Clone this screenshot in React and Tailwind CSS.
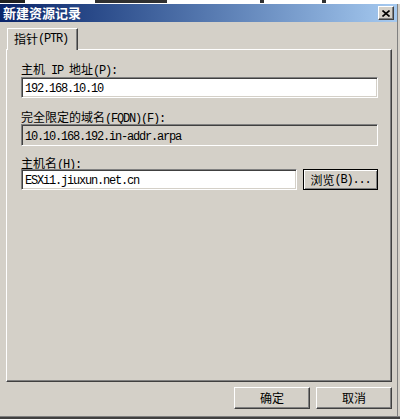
const CJK = /([\u3000-\u9fff\uff00-\uffef]+)/

function Txt({ s }) {
  return s.split(CJK).filter(Boolean).map((p, i) =>
    CJK.test(p) ? (
      <span key={i} className="font-['Noto_Sans_CJK_SC',sans-serif] text-[12px]">{p}</span>
    ) : (
      <span key={i} className="font-['Liberation_Mono',monospace] text-[12px] tracking-[-1.2px]">{p}</span>
    )
  )
}

function Field({ value, disabled, className = '' }) {
  return (
    <div
      className={`flex h-[21px] items-center border border-t-[#808080] border-l-[#808080] border-b-white border-r-white pl-[2px] leading-[12px] text-black shadow-[inset_1px_1px_0_#404040,inset_-1px_-1px_0_#d4d0c8] ${disabled ? 'bg-[#d4d0c8]' : 'bg-white'} ${className}`}
    >
      <div className="pl-[1px]"><Txt s={value} /></div>
    </div>
  )
}

function Button({ label, focused, className = '' }) {
  return (
    <div
      className={`flex items-center justify-center leading-[12px] text-black ${focused ? 'border border-black shadow-[inset_1px_1px_0_#fff,inset_-1px_-1px_0_#808080]' : 'border border-t-white border-l-white border-b-[#404040] border-r-[#404040] shadow-[inset_-1px_-1px_0_#808080]'} ${className}`}
    >
      <Txt s={label} />
    </div>
  )
}

export default function App() {
  return (
    <div className="flex h-[419px] w-[400px] flex-col overflow-hidden bg-[#d4d0c8]">
      {/* leftover of the window behind */}
      <div className="flex h-[4px] items-start bg-white">
        <span className="h-[3px] w-[25px] bg-[#202020]" />
        <span className="ml-[70px] h-[3px] w-[72px] bg-[#303030]" />
        <span className="ml-[93px] h-[3px] w-[4px] bg-[#303030]" />
        <span className="ml-[58px] h-[3px] w-[4px] bg-[#303030]" />
      </div>

      <div className="mr-[2px] flex flex-1 flex-col border-r border-r-[#808080]">
        {/* title bar */}
        <div className="flex h-[18px] items-center justify-between bg-gradient-to-r from-[#0a246a] to-[#a6caf0] pl-[3px] pr-[3px]">
          <span className="font-['Noto_Sans_CJK_SC',sans-serif] text-[13px] font-bold leading-[14px] text-white">新建资源记录</span>
          <div className="flex h-[14px] w-[16px] items-center justify-center border border-t-white border-l-white border-b-[#404040] border-r-[#404040] bg-[#d4d0c8] shadow-[inset_-1px_-1px_0_#808080]">
            <svg width="8" height="7" viewBox="0 0 8 7">
              <path d="M0.5 0.5 L7.5 6.5 M7.5 0.5 L0.5 6.5" stroke="#000" strokeWidth="1.6" />
            </svg>
          </div>
        </div>

        {/* tabs */}
        <div className="mt-[6px] pl-[7px]">
          <div className="relative z-10 -mb-[1px] flex h-[22px] w-[71px] items-start border-t border-l border-r border-t-white border-l-white border-r-[#404040] bg-[#d4d0c8] pl-[6px] pt-[4px] leading-[12px] shadow-[inset_-1px_0_0_#808080]">
            <Txt s="指针(PTR)" />
          </div>
        </div>

        {/* tab panel */}
        <div className="ml-[6px] flex h-[333px] w-[386px] flex-col border border-t-white border-l-white border-b-[#404040] border-r-[#404040] shadow-[inset_-1px_-1px_0_#808080]">
          <div className="ml-[14px] flex flex-col">
            <div className="mt-[12px] h-[12px] leading-[12px] text-black"><Txt s="主机 IP 地址(P):" /></div>
            <Field value="192.168.10.10" className="mt-[3px] w-[357px]" />

            <div className="mt-[12px] h-[12px] leading-[12px] text-black"><Txt s="完全限定的域名(FQDN)(F):" /></div>
            <Field value="10.10.168.192.in-addr.arpa" disabled className="mt-[2px] h-[22px] w-[357px]" />

            <div className="mt-[10px] h-[12px] leading-[12px] text-black"><Txt s="主机名(H):" /></div>
            <div className="mt-[1px] flex gap-[6px]">
              <Field value="ESXi1.jiuxun.net.cn" className="w-[276px]" />
              <Button label="浏览(B)..." focused className="h-[21px] w-[75px]" />
            </div>
          </div>
        </div>

        {/* footer buttons */}
        <div className="mt-[5px] flex justify-end gap-[6px] pr-[5px]">
          <Button label="确定" className="h-[22px] w-[76px]" />
          <Button label="取消" className="h-[22px] w-[76px]" />
        </div>
      </div>

      <div className="h-[1px] bg-[#808080]" />
      <div className="h-[2px] bg-[#404040]" />
    </div>
  )
}
